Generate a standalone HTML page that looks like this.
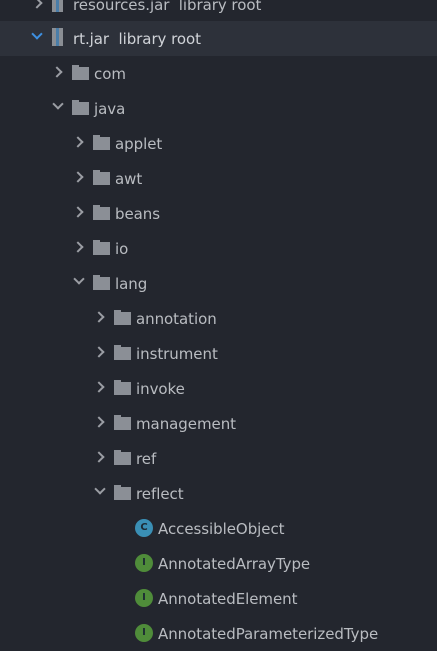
<!DOCTYPE html><html><head><style>
body{margin:0;width:437px;height:650px;background:#23262e;overflow:hidden;font-family:"DejaVu Sans",sans-serif;font-size:15px;color:#b9bcc1}
.r{position:absolute;left:0;width:437px;height:35px}
.sel{background:#2d313a}
.a{position:absolute;top:12px;width:6px;height:6px;border-right:2px solid #9a9da3;border-bottom:2px solid #9a9da3}
.ar{transform:rotate(-45deg)}
.ad{transform:rotate(45deg);top:9px}
.blue{border-color:#3d8fe0}
.f{position:absolute;top:11px;width:17px;height:13px;background:#8b8f96}
.f:before{content:"";position:absolute;left:0;top:-2px;width:7px;height:3px;background:#8b8f96}
.t{position:absolute;top:9px;white-space:nowrap;letter-spacing:-0.05px}
.j{position:absolute;top:7px;width:11px;height:18px;background:#8a8e94}
.j:after{content:"";position:absolute;left:4px;top:0;width:3px;height:18px;background:#4a7da8}
.c{position:absolute;top:8px;width:18px;height:18px;border-radius:50%;color:#1c2a33;font-size:10px;font-weight:bold;text-align:center;line-height:18px}
</style></head><body>
<div class="r" style="top:-13px"><div class="a ar" style="left:33px"></div><div class="j" style="left:52px"></div><div class="t" style="left:73px">resources.jar&nbsp; library root</div></div>
<div class="r sel" style="top:21px"><div class="a ad blue" style="left:33px"></div><div class="j" style="left:52px"></div><div class="t" style="left:73px;color:#d0d3d8">rt.jar&nbsp; library root</div></div>
<div class="r" style="top:56px"><div class="a ar" style="left:53px"></div><div class="f" style="left:72px"></div><div class="t" style="left:94px">com</div></div>
<div class="r" style="top:91px"><div class="a ad" style="left:54px"></div><div class="f" style="left:72px"></div><div class="t" style="left:94px">java</div></div>
<div class="r" style="top:126px"><div class="a ar" style="left:74px"></div><div class="f" style="left:93px"></div><div class="t" style="left:115px">applet</div></div>
<div class="r" style="top:161px"><div class="a ar" style="left:74px"></div><div class="f" style="left:93px"></div><div class="t" style="left:115px">awt</div></div>
<div class="r" style="top:196px"><div class="a ar" style="left:74px"></div><div class="f" style="left:93px"></div><div class="t" style="left:115px">beans</div></div>
<div class="r" style="top:231px"><div class="a ar" style="left:74px"></div><div class="f" style="left:93px"></div><div class="t" style="left:115px">io</div></div>
<div class="r" style="top:266px"><div class="a ad" style="left:75px"></div><div class="f" style="left:93px"></div><div class="t" style="left:115px">lang</div></div>
<div class="r" style="top:301px"><div class="a ar" style="left:95px"></div><div class="f" style="left:114px"></div><div class="t" style="left:136px">annotation</div></div>
<div class="r" style="top:336px"><div class="a ar" style="left:95px"></div><div class="f" style="left:114px"></div><div class="t" style="left:136px">instrument</div></div>
<div class="r" style="top:371px"><div class="a ar" style="left:95px"></div><div class="f" style="left:114px"></div><div class="t" style="left:136px">invoke</div></div>
<div class="r" style="top:406px"><div class="a ar" style="left:95px"></div><div class="f" style="left:114px"></div><div class="t" style="left:136px">management</div></div>
<div class="r" style="top:441px"><div class="a ar" style="left:95px"></div><div class="f" style="left:114px"></div><div class="t" style="left:136px">ref</div></div>
<div class="r" style="top:476px"><div class="a ad" style="left:96px"></div><div class="f" style="left:114px"></div><div class="t" style="left:136px">reflect</div></div>
<div class="r" style="top:511px"><div class="c" style="left:135px;background:#3a8fb5">C</div><div class="t" style="left:158px">AccessibleObject</div></div>
<div class="r" style="top:546px"><div class="c" style="left:135px;background:#4f8c3a">I</div><div class="t" style="left:158px">AnnotatedArrayType</div></div>
<div class="r" style="top:581px"><div class="c" style="left:135px;background:#4f8c3a">I</div><div class="t" style="left:158px">AnnotatedElement</div></div>
<div class="r" style="top:616px"><div class="c" style="left:135px;background:#4f8c3a">I</div><div class="t" style="left:158px">AnnotatedParameterizedType</div></div>
</body></html>
